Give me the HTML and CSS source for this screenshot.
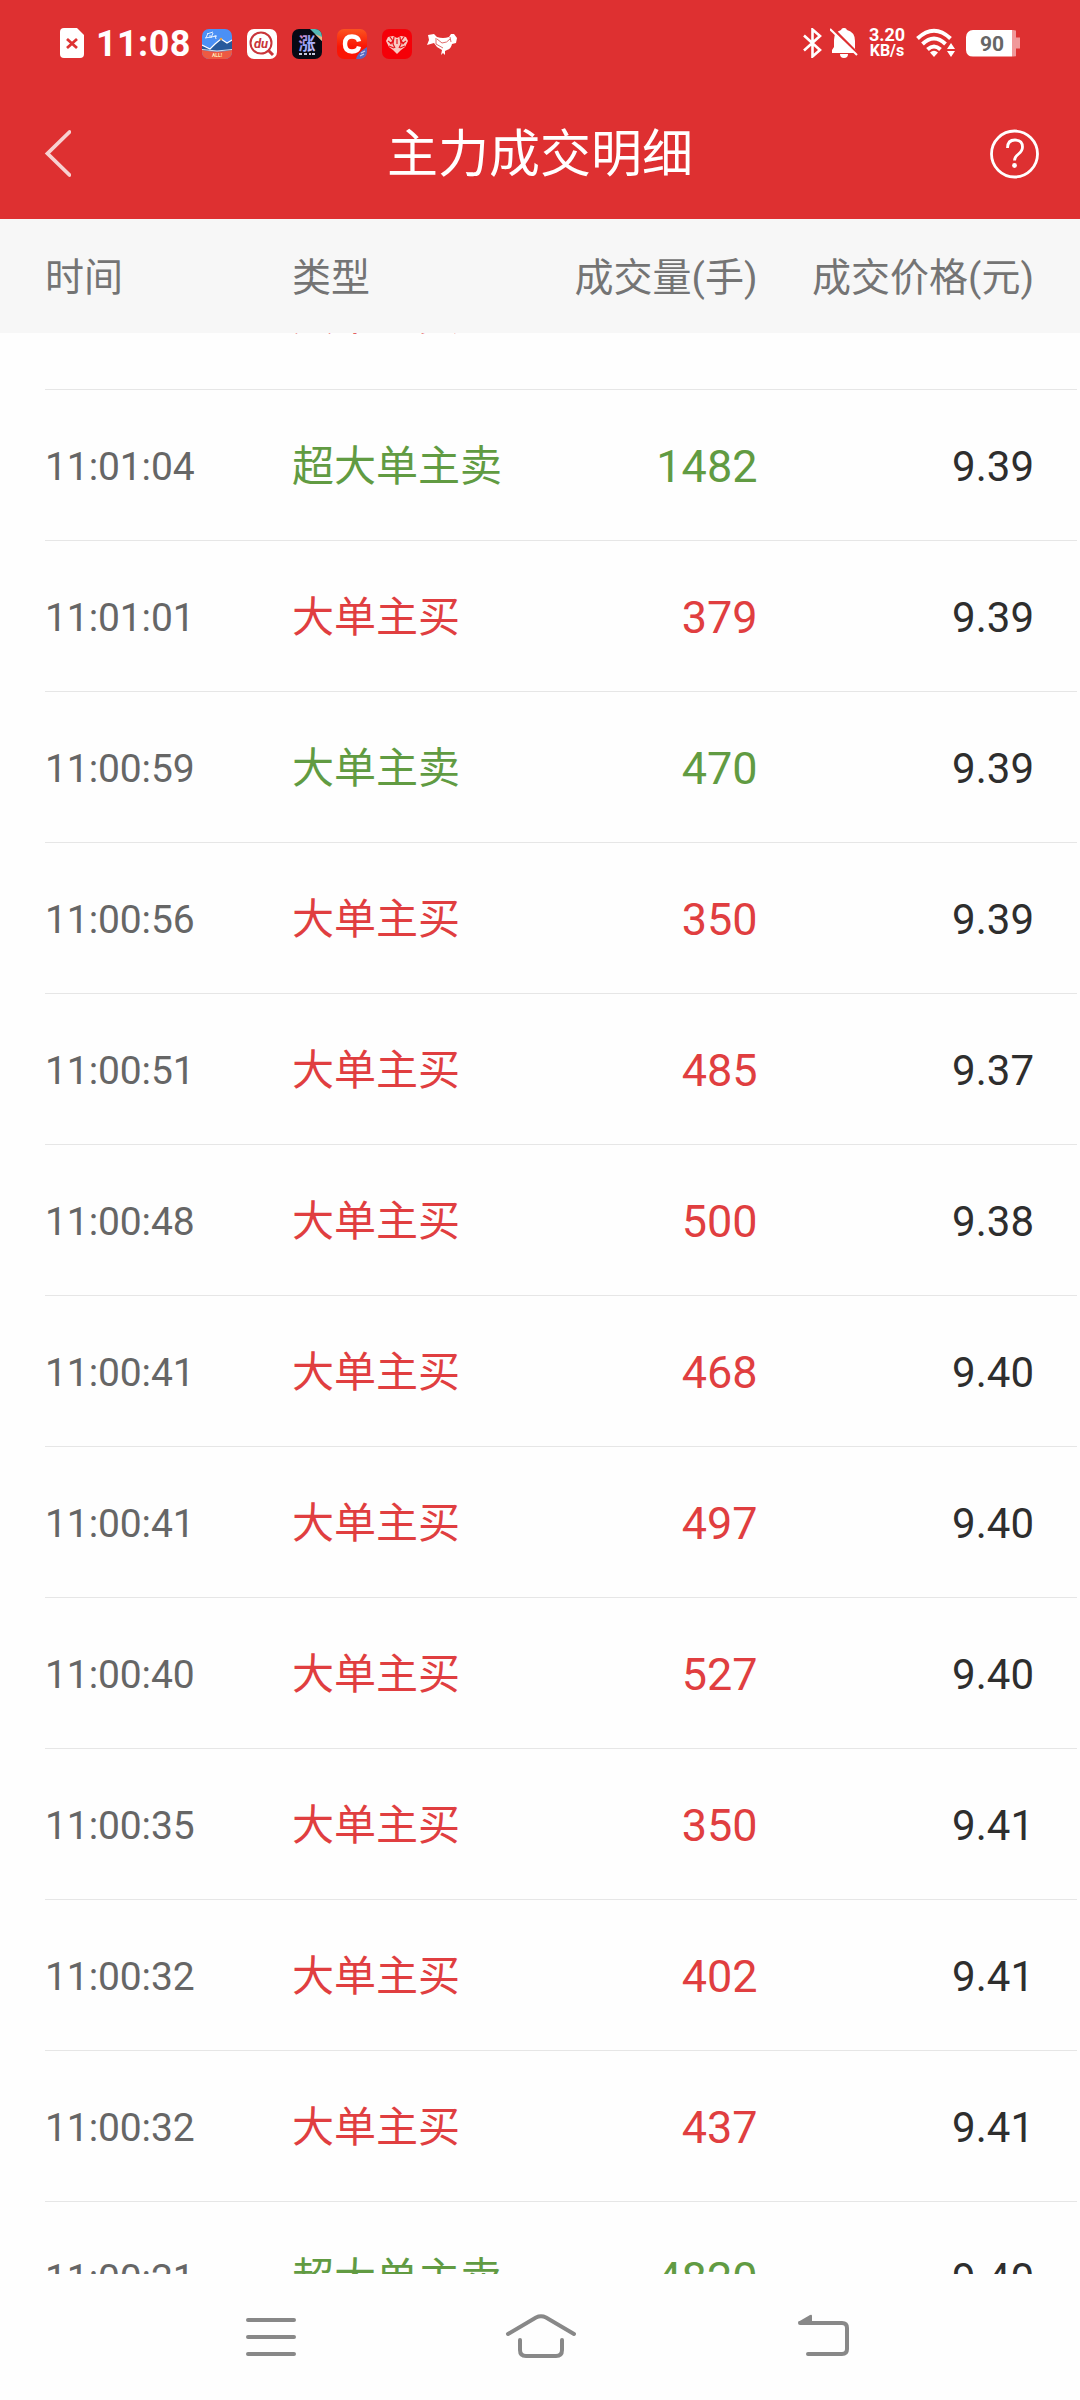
FILE: index.html
```html
<!DOCTYPE html>
<html lang="zh-CN">

<head>
  <meta charset="UTF-8" />
  <meta name="viewport" content="width=device-width, initial-scale=1.0" />
  <title>主力成交明细</title>
  <link rel="stylesheet" href="styles.css">
</head>

<body>
  <header class="top">
    <div class="status-bar">
      <svg class="sim" width="24" height="30" viewBox="0 0 24 30">
        <path d="M4 0h13l7 7v19a4 4 0 0 1-4 4H4a4 4 0 0 1-4-4V4a4 4 0 0 1 4-4z" fill="#fff" />
        <path d="M7 11l10 9M17 11L7 20" stroke="#d33" stroke-width="2.8" />
      </svg>
      <span class="clock">11:08</span>
      <div class="apps">
        <svg width="30" height="30" viewBox="0 0 30 30">
          <defs><clipPath id="r"><rect width="30" height="30" rx="7" /></clipPath></defs>
          <g clip-path="url(#r)">
            <rect width="30" height="30" fill="#4b90f5" />
            <path d="M0 16l8 4 5-5 6-5 6 4 5-3v11H0z" fill="#285a9c" />
            <path d="M0 16l8 4 5-5 6-5 6 4 5-3" fill="none" stroke="#fff" stroke-width="1.2" />
            <path d="M0 21q15 3 30 0v9H0z" fill="#ee5942" />
            <path d="M0 20.500q15 3 30 0" fill="none" stroke="#fff" stroke-width=".8" />
            <circle cx="19" cy="10" r="1.3" fill="#e8a34e" />
            <path d="M5 5l6-2M3 9l12-2M6 4l-2 5M8 6v3M11 4l-2 5M13 6l1 4" stroke="#e6f0ff" stroke-width="1" />
          </g>
          <text x="15" y="28" class="tiny" fill="#ffe9b8">ALL!</text>
        </svg>
        <svg width="30" height="30" viewBox="0 0 30 30">
          <rect width="30" height="30" rx="7" fill="#fff" />
          <circle cx="14" cy="14" r="10.5" fill="none" stroke="#c9353a" stroke-width="2" />
          <path d="M21 21l5 5" stroke="#c9353a" stroke-width="3" />
          <text x="14" y="18.5" class="du" fill="#c9353a">du</text>
        </svg>
        <svg width="30" height="30" viewBox="0 0 30 30">
          <defs>
            <linearGradient id="z" x1="0" y1="0" x2="1" y2="1">
              <stop offset="0" stop-color="#ff6f9c" /><stop offset=".5" stop-color="#8ea5ff" /><stop offset="1" stop-color="#e6cfff" />
            </linearGradient>
          </defs>
          <rect width="30" height="30" rx="7" fill="#080914" />
          <path d="M18 0h5a7 7 0 0 1 7 7v5z" fill="#55b9b4" />
          <path d="M23 5l7 7V8z" fill="#f0b486" />
          <text x="15" y="21" class="zhang" fill="url(#z)">涨</text>
          <path d="M7 25h3M12 25h3M17 25h2M20 25h3" stroke="#c5c8dd" stroke-width="1.8" />
        </svg>
        <svg width="30" height="30" viewBox="0 0 30 30">
          <defs>
            <linearGradient id="c" x1="0" y1="0" x2="0" y2="1">
              <stop offset="0" stop-color="#fc5420" /><stop offset=".6" stop-color="#fa1505" />
            </linearGradient>
          </defs>
          <rect width="30" height="30" rx="7" fill="url(#c)" />
          <path d="M22 12.500q-1-5-7-5-7 0-7 7.500t7 7.500q6 0 7-5" fill="none" stroke="#fff" stroke-width="4.4" />
          <path d="M30 18v5a7 7 0 0 1-7 7h-4q1-6 11-12z" fill="#5869c2" />
          <path d="M24 24l4-2M23 27l4-2" stroke="#c4cbee" stroke-width="1.3" />
        </svg>
        <svg width="30" height="30" viewBox="0 0 30 30">
          <rect width="30" height="30" rx="7" fill="#f50008" />
          <path d="M15 25l-4-4-4-3-3-6 2-4 5-1 4 2 4-2 5 1 2 4-3 6-4 3z" fill="#f9c9c2" />
          <path d="M6 12l4 3M8 8l3 4-3 3M12 8l-1 7 2 4M18 8l1 7-2 4M22 8l-3 4 3 3M24 12l-4 3M7 17l5 2M23 17l-5 2M15 10v5" fill="none" stroke="#e6141a" stroke-width="1.2" />
        </svg>
        <svg width="30" height="30" viewBox="0 0 30 30">
          <path d="M0 16l2-5-1-5 6-1 3 3q6 2 12 0l2-3h3l3 4-1 5-4 1q-1 5-5 6l-2 1v4l-2-2-2 2 1-5-5-3-3-4z" fill="#fff" />
          <path d="M9 9v6l7 4M10 10l5 4q5 0 8-4M23 8l1 5" fill="none" stroke="#de6b6b" stroke-width="1" />
        </svg>
      </div>

      <div class="signals">
        <svg width="20" height="30" viewBox="0 0 20 30">
          <path d="M1 7.500L17 22l-7.500 6.500v-27L17 8 1 22.500" fill="none" stroke="#fff" stroke-width="2.6" />
        </svg>
        <svg class="bell" width="28" height="30" viewBox="0 0 28 30">
          <path d="M14 0a3 3 0 0 1 3 2q8 2 8 11v8l2 4H2v-3l2-3v-7q0-8 7-10a3 3 0 0 1 3-2zM10 26h8a4 4 0 0 1-8 0z" fill="#fff" />
          <path d="M2 0l26 26" stroke="#de3031" stroke-width="3" />
          <path d="M0 1l27 26" stroke="#fff" stroke-width="2" />
        </svg>
        <div class="speed"><b>3.20</b><span>KB/s</span></div>
        <svg class="wifi" width="40" height="30" viewBox="0 0 40 30">
          <path d="M1.500 10.500Q18 -5 34.500 10.500M6.500 16Q18 5 29.500 16M11.500 21.500Q18 15.500 24.500 21.500" fill="none" stroke="#fff" stroke-width="4" />
          <path d="M18 29l-4-4.500q4-3.500 8 0z" fill="#fff" />
          <path d="M31 21h8l-4-6zM31 23h8l-4 6z" fill="#fff" />
        </svg>
        <div class="battery"><span>90</span></div>
      </div>
    </div>

    <div class="title-bar">
      <svg width="28" height="50" viewBox="0 0 28 50">
        <path d="M26.500 3L4.500 24.500l22 21.500" fill="none" stroke="#f7d1d1" stroke-width="3.8" stroke-linecap="round" />
      </svg>
      <h1>主力成交明细</h1>
      <svg width="50" height="50" viewBox="0 0 50 50">
        <circle cx="25.5" cy="25" r="23" fill="none" stroke="#fff" stroke-width="2.8" />
        <path d="M18.500 19q0-8 7.500-8t7.500 7q0 4-4 7t-4 6.500" fill="none" stroke="#fff" stroke-width="2.8" />
        <circle cx="25.5" cy="36.5" r="2.4" fill="#fff" />
      </svg>
    </div>
  </header>

  <div class="cols table-head">
    <span>时间</span>
    <span>类型</span>
    <span class="right">成交量(手)</span>
    <span class="right">成交价格(元)</span>
  </div>

  <main class="list">
    <div class="scroll" id="rows"></div>
  </main>

  <nav class="nav">
    <svg width="54" height="50" viewBox="0 0 54 50">
      <path d="M4 8h46M4 25h46M4 42h46" />
    </svg>
    <svg class="home" width="72" height="50" viewBox="0 0 72 50">
      <path d="M3 22L31 5.500q5-2.500 10 0L69 22M15 28v10q0 6 6 6h30q6 0 6-6V28" />
    </svg>
    <svg width="54" height="50" viewBox="0 0 54 50">
      <path d="M4 11h42q5 0 5 5v21q0 5-5 5H12" />
      <path class="tip" d="M2 10L14 3q2-1 2 1v8H4z" />
    </svg>
  </nav>

  <script>
    const trades = [
      ["", "大单主买", "", ""],
      ["11:01:04", "超大单主卖", 1482, "9.39"],
      ["11:01:01", "大单主买", 379, "9.39"],
      ["11:00:59", "大单主卖", 470, "9.39"],
      ["11:00:56", "大单主买", 350, "9.39"],
      ["11:00:51", "大单主买", 485, "9.37"],
      ["11:00:48", "大单主买", 500, "9.38"],
      ["11:00:41", "大单主买", 468, "9.40"],
      ["11:00:41", "大单主买", 497, "9.40"],
      ["11:00:40", "大单主买", 527, "9.40"],
      ["11:00:35", "大单主买", 350, "9.41"],
      ["11:00:32", "大单主买", 402, "9.41"],
      ["11:00:32", "大单主买", 437, "9.41"],
      ["11:00:21", "超大单主卖", 4820, "9.40"]
    ];

    document.getElementById("rows").innerHTML = trades.map(([time, type, volume, price]) => {
      const side = type.endsWith("买") ? "buy" : "sell";
      return `<div class="cols row ${side}">
        <span class="time">${time}</span>
        <span class="type">${type}</span>
        <span class="volume right">${volume}</span>
        <span class="price right">${price}</span>
      </div>`;
    }).join("");
  </script>
</body>

</html>
```
FILE: styles.css
```css
* {
  box-sizing: border-box;
}

body {
  margin: 0;
  height: 2400px;
  display: flex;
  flex-direction: column;
  overflow: hidden;
  background: #fefefe;
  font-family: Roboto, "Noto Sans CJK SC", sans-serif;
}

svg {
  display: block;
  flex: none;
}

.top {
  height: 219px;
  background: #de3031;
  color: #fff;
}

.status-bar {
  height: 88px;
  padding: 0 60px;
  display: flex;
  align-items: center;
}

.sim {
  margin-bottom: 2px;
}

.clock {
  margin-left: 12px;
  width: 106px;
  font-size: 36px;
  font-weight: bold;
  letter-spacing: 0.4px;
  line-height: 30px;
}

.apps {
  display: flex;
  gap: 15px;
}

.tiny {
  font: bold 5px Roboto, sans-serif;
  text-anchor: middle;
}

.du {
  font: italic bold 13px Roboto, sans-serif;
  text-anchor: middle;
}

.zhang {
  font: bold 17px "Noto Sans CJK SC", sans-serif;
  text-anchor: middle;
}

.signals {
  display: flex;
  align-items: center;
  margin: 0 0 2px auto;
}

.bell {
  margin-left: 7px;
}

.speed {
  width: 36px;
  margin: 0 11px;
  display: flex;
  flex-direction: column;
  align-items: center;
  font-size: 18px;
  line-height: 16px;
}

.speed span {
  font-size: 16px;
  font-weight: bold;
}

.battery {
  width: 54px;
  height: 27px;
  margin-left: 10px;
  padding-right: 2px;
  border-radius: 7px;
  background: linear-gradient(to right, #fff 46px, #f0989a 46px);
  clip-path: polygon(0 0, 50px 0, 50px 8px, 54px 8px, 54px 19px, 50px 19px, 50px 27px, 0 27px);
  color: #666;
  font-size: 21px;
  font-weight: bold;
  line-height: 28px;
  text-align: center;
}

.title-bar {
  height: 131px;
  padding: 0 41px 0 43px;
  display: flex;
  align-items: center;
  justify-content: space-between;
}

.title-bar h1 {
  margin: 2px 0 0 20px;
  font-size: 51px;
  font-weight: normal;
  line-height: 60px;
}

.cols {
  display: grid;
  grid-template-columns: 247px 180px 285.5px 276.5px;
  align-items: center;
}

.right {
  text-align: right;
  white-space: nowrap;
}

.table-head {
  height: 114px;
  padding: 0 0 4px 45px;
  background: #f7f7f7;
  color: #747474;
  font-size: 39px;
}

.list {
  height: 1941px;
  overflow: hidden;
}

/* list is scrolled partway through its first row */
.scroll {
  margin-top: -94px;
}

.row {
  height: 151px;
  margin: 0 3px 0 45px;
  padding-top: 4px;
  border-bottom: 1px solid #e6e6e6;
  line-height: 60px;
  white-space: nowrap;
}

.time {
  color: #666;
  font-size: 39px;
  letter-spacing: -0.1px;
}

.type {
  font-size: 42px;
}

.volume {
  font-size: 45px;
}

.price {
  color: #2e2e2e;
  font-size: 42px;
}

.buy .type,
.buy .volume {
  color: #e03e40;
}

.sell .type,
.sell .volume {
  color: #619b42;
}

.nav {
  flex: 1;
  display: flex;
  justify-content: space-between;
  padding: 38px 230px 0 244px;
}

.nav svg {
  fill: none;
  stroke: #888;
  stroke-width: 4;
  stroke-linecap: round;
}

.nav .home {
  margin-right: 12px;
}

.nav .tip {
  fill: #888;
  stroke: none;
}
```
